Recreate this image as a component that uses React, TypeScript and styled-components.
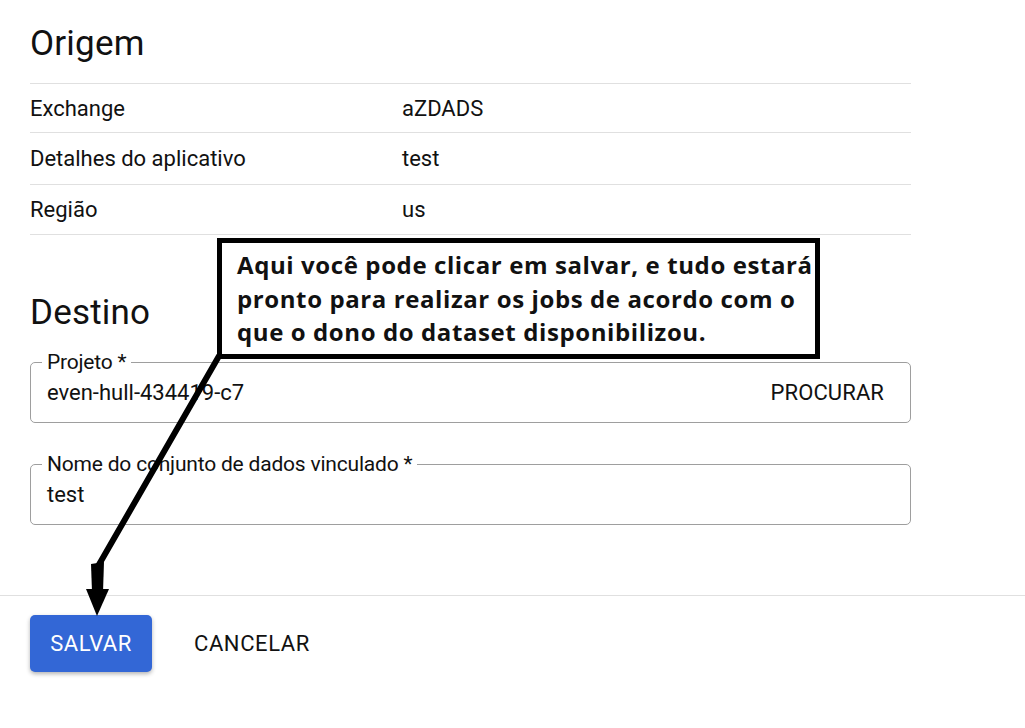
import React from "react";
import styled, { createGlobalStyle } from "styled-components";

const Global = createGlobalStyle`
  html, body { margin: 0; padding: 0; background: #fff; }
  body { font-family: Roboto, "Liberation Sans", Arial, sans-serif; color: #111; }
  * { box-sizing: border-box; }
`;

const Page = styled.div`
  position: relative;
  width: 1025px;
  height: 728px;
  overflow: hidden;
  background: #fff;
`;

const Content = styled.div`
  width: 911px;
  padding: 24px 0 0 30px;
  display: flex;
  flex-direction: column;
`;

const Heading = styled.h2<{ $top?: number }>`
  margin: ${(p) => p.$top ?? 0}px 0 0 0;
  font-size: 35px;
  line-height: 40px;
  font-weight: 400;
  color: #111;
  letter-spacing: 0.2px;
`;

const Table = styled.div`
  margin-top: 19px;
  display: flex;
  flex-direction: column;
  border-bottom: 1px solid #e0e0e0;
`;

const Row = styled.div<{ $h: number }>`
  display: grid;
  grid-template-columns: 372px 1fr;
  align-items: center;
  height: ${(p) => p.$h}px;
  border-top: 1px solid #e0e0e0;
  font-size: 22px;
  color: #111;
`;

const Fields = styled.div`
  margin-top: 20px;
  display: flex;
  flex-direction: column;
  gap: 32px;
`;

const Field = styled.fieldset`
  margin: 0;
  padding: 0 26px 10px 16px;
  border: 1px solid #9e9e9e;
  border-radius: 5px;
  min-width: 0;
`;

const Legend = styled.legend`
  padding: 0 5px;
  margin-left: -5px;
  font-size: 21px;
  line-height: 19px;
  color: #111;
  letter-spacing: -0.2px;
`;

const FieldRow = styled.div`
  height: 40px;
  display: flex;
  align-items: center;
  justify-content: space-between;
  font-size: 22px;
  color: #111;
`;

const TextButton = styled.button`
  border: none;
  background: transparent;
  padding: 0;
  font-family: Roboto, "Liberation Sans", Arial, sans-serif;
  font-size: 22px;
  color: #111;
  letter-spacing: 0.1px;
  cursor: pointer;
`;

const Footer = styled.div`
  margin-top: 70px;
  border-top: 1px solid #e0e0e0;
  padding: 19px 0 0 30px;
  display: flex;
  align-items: center;
  gap: 42px;
`;

const PrimaryButton = styled.button`
  width: 122px;
  height: 57px;
  border: none;
  border-radius: 5px;
  background: #3367d6;
  color: #fff;
  font-family: Roboto, "Liberation Sans", Arial, sans-serif;
  font-size: 22px;
  font-weight: 400;
  letter-spacing: 0.5px;
  box-shadow: 0 2px 4px rgba(0, 0, 0, 0.3);
  cursor: pointer;
`;

const CancelButton = styled(TextButton)`
  letter-spacing: 0.6px;
`;

const Callout = styled.div`
  position: absolute;
  left: 217px;
  top: 238px;
  width: 603px;
  height: 121px;
  border: 5px solid #000;
  background: #fff;
  padding: 5px 0 0 15px;
  font-family: "Open Sans", "Noto Sans", sans-serif;
  font-weight: 700;
  font-size: 24px;
  line-height: 33.5px;
  letter-spacing: 0.6px;
  color: #111;
`;

const CalloutLine = styled.span`
  display: block;
  white-space: nowrap;
`;

const Overlay = styled.svg`
  position: absolute;
  left: 0;
  top: 0;
  pointer-events: none;
`;

export default function App() {
  return (
    <Page>
      <Global />
      <Content>
        <Heading>Origem</Heading>
        <Table>
          <Row $h={49}>
            <span>Exchange</span>
            <span>aZDADS</span>
          </Row>
          <Row $h={52}>
            <span>Detalhes do aplicativo</span>
            <span>test</span>
          </Row>
          <Row $h={50}>
            <span>Região</span>
            <span>us</span>
          </Row>
        </Table>
        <Heading $top={58}>Destino</Heading>
        <Fields>
          <Field>
            <Legend>Projeto *</Legend>
            <FieldRow>
              <span>even-hull-434419-c7</span>
              <TextButton>PROCURAR</TextButton>
            </FieldRow>
          </Field>
          <Field>
            <Legend>Nome do conjunto de dados vinculado *</Legend>
            <FieldRow>
              <span>test</span>
            </FieldRow>
          </Field>
        </Fields>
      </Content>
      <Footer>
        <PrimaryButton>SALVAR</PrimaryButton>
        <CancelButton>CANCELAR</CancelButton>
      </Footer>
      <Callout>
        <CalloutLine>Aqui você pode clicar em salvar, e tudo estará</CalloutLine>
        <CalloutLine>pronto para realizar os jobs de acordo com o</CalloutLine>
        <CalloutLine>que o dono do dataset disponibilizou.</CalloutLine>
      </Callout>
      <Overlay width="1025" height="728" viewBox="0 0 1025 728">
        <line x1="219" y1="356" x2="97" y2="568" stroke="#000" strokeWidth="6" strokeLinecap="round" />
        <polygon points="91,564 104,562 103,592 92,592" fill="#000" />
        <polygon points="86,589 109,589 97,616" fill="#000" />
      </Overlay>
    </Page>
  );
}
